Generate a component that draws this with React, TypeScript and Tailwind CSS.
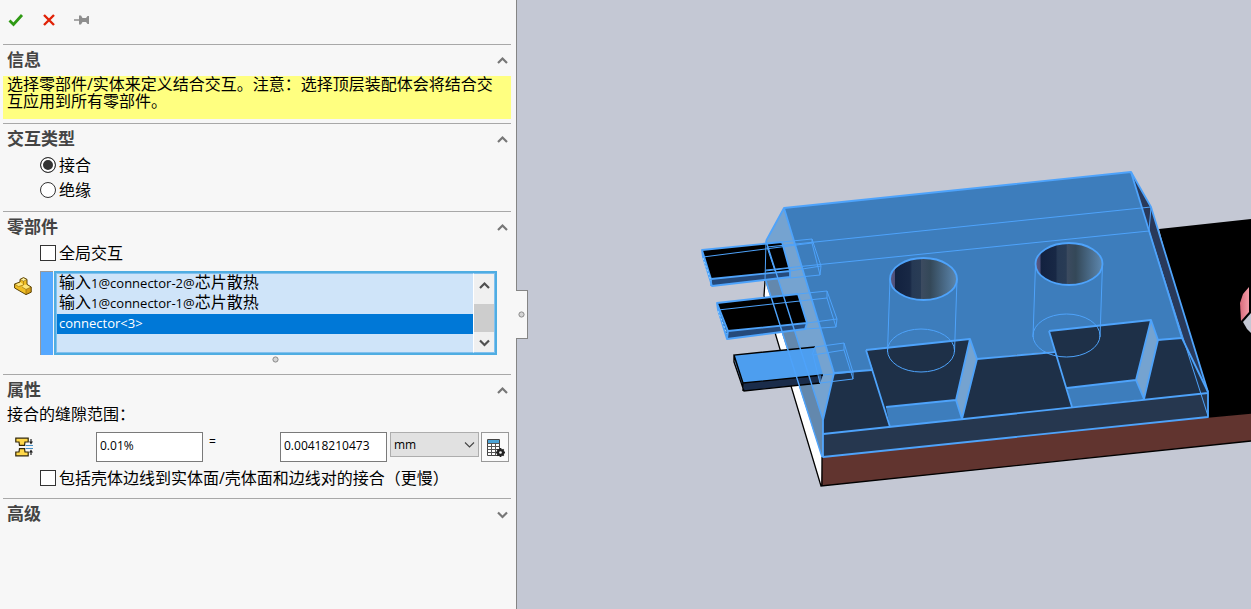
import { useState } from "react";
import type { ReactNode } from "react";

const components = [
  "输入1@connector-2@芯片散热",
  "输入1@connector-1@芯片散热",
  "connector<3>",
];

function Chevron({ up = false, color = "#777", size = 11, stroke = 2.2 }) {
  return (
    <svg width={size} height={size} viewBox="0 0 11 11" fill="none" aria-hidden="true">
      <path d={up ? "M1 8L5.5 3.5L10 8" : "M1 3.5L5.5 8L10 3.5"} stroke={color} strokeWidth={stroke} />
    </svg>
  );
}

function Grip() {
  return (
    <svg width="7" height="7" viewBox="0 0 7 7" aria-hidden="true">
      <circle cx="3.5" cy="3.5" r="2.6" fill="#d4d4d4" stroke="#8a8a8a" />
    </svg>
  );
}

type SectionProps = { title: string; open?: boolean; className?: string; children?: ReactNode };

function Section({ title, open = true, className = "", children }: SectionProps) {
  return (
    <section className={`border-t border-[#a8a8a8] ${className}`}>
      <h2>
        <button
          type="button"
          aria-expanded={open}
          className="flex h-[30px] w-full items-center justify-between pr-[3px] pl-1 text-[17px] leading-5 font-bold text-[#444]"
        >
          {title}
          <Chevron up={open} />
        </button>
      </h2>
      {children}
    </section>
  );
}

type RadioProps = { label: string; value: string; checked: boolean; onChange: (v: string) => void };

function Radio({ label, value, checked, onChange }: RadioProps) {
  return (
    <label className="flex h-[21px] items-center gap-[3px] pl-[37px]">
      <input
        type="radio"
        name="interaction"
        checked={checked}
        onChange={() => onChange(value)}
        className="size-4 appearance-none rounded-full border border-[#333] bg-white checked:bg-[#333] checked:shadow-[inset_0_0_0_2px_white]"
      />
      {label}
    </label>
  );
}

function Checkbox({ label }: { label: string }) {
  return (
    <label className="flex h-[21px] items-center gap-[3px] pl-[37px]">
      <input type="checkbox" className="size-4 shrink-0 appearance-none border border-[#333] bg-white checked:bg-[#333]" />
      {label}
    </label>
  );
}

function Toolbar() {
  return (
    <div className="flex h-11 items-center gap-[18px] pb-1 pl-[5px]">
      <button type="button" aria-label="确定">
        <svg width="16" height="14" viewBox="0 0 16 14" fill="none">
          <path d="M1.5 7.5L5.5 11.5L14 2" stroke="#2f9a14" strokeWidth="2.8" />
        </svg>
      </button>
      <button type="button" aria-label="取消">
        <svg width="14" height="14" viewBox="0 0 14 14" fill="none">
          <path d="M2 2L12 12M12 2L2 12" stroke="#e02207" strokeWidth="2.4" />
        </svg>
      </button>
      <button type="button" aria-label="保持可见">
        <svg width="16" height="12" viewBox="0 0 16 12" fill="#8e8e8e">
          <path d="M0 5.2H5V1.5H7L8.5 4H12L13.5 2H15V10H13.5L12 8H8.5L7 10.5H5V6.8H0Z" />
        </svg>
      </button>
    </div>
  );
}

function PartIcon() {
  return (
    <svg width="18" height="18" viewBox="0 0 18 18" strokeLinejoin="round" aria-hidden="true">
      <path d="M0.6 7L6 5V2.4L9.5 0.6L13 2.4V7.4L17.2 10V15.2L12 17.6L0.6 11Z" fill="#efbd24" />
      <path d="M6 2.4L9.5 0.6L13 2.4L9.5 4.2Z" fill="#fff0a0" />
      <path d="M0.6 7L6 5L9.5 7.4L4.5 9.6Z" fill="#ffe676" />
      <path d="M9.5 8L13 7.4L17.2 10L12 12.4L8 10Z" fill="#ffe676" />
      <path d="M12 12.4L17.2 10V15.2L12 17.6Z" fill="#d79f17" />
      <path d="M6 2.4L9.5 4.2L13 2.4M9.5 4.2V8L4.5 9.6L0.6 7M8 10L12 12.4L17.2 10M12 12.4V17.6" fill="none" stroke="#8a660e" strokeWidth="0.6" />
      <path d="M0.6 7L6 5V2.4L9.5 0.6L13 2.4V7.4L17.2 10V15.2L12 17.6L0.6 11Z" fill="none" stroke="#5b4308" />
    </svg>
  );
}

function GapIcon() {
  return (
    <svg width="19" height="20" viewBox="0 0 19 20" aria-hidden="true">
      <path d="M0.8 1.2H13.2V5H10L9.5 8.4H4.5L4 5H0.8Z" fill="#ffd84a" stroke="#33280a" strokeWidth="1.2" />
      <path d="M0.8 18.8H13.2V15H10L9.5 11.6H4.5L4 15H0.8Z" fill="#ffd84a" stroke="#33280a" strokeWidth="1.2" />
      <path d="M10.5 8.5H18M10.5 11.5H18" stroke="#4791c8" />
      <path d="M16 2V6M16 18V14" stroke="#222" strokeWidth="1.2" />
      <path d="M14 4.5H18L16 7.5ZM14 15.5H18L16 12.5Z" fill="#222" />
    </svg>
  );
}

function TableGearIcon() {
  return (
    <svg width="19" height="19" viewBox="0 0 19 19" aria-hidden="true">
      <path d="M1.5 1.5H13.5V17.5H1.5Z" fill="#fff" stroke="#444" />
      <path d="M2 2H13V5H2Z" fill="#4aa3d6" />
      <path d="M1.5 5.5H13.5M1.5 8.5H13.5M1.5 11.5H13.5M1.5 14.5H13.5M5.5 5.5V17.5M9.5 5.5V17.5" stroke="#555" />
      <circle cx="14.5" cy="14.5" r="3.6" fill="#222" />
      <path d="M14.5 10V19M10 14.5H19M11.3 11.3L17.7 17.7M17.7 11.3L11.3 17.7" stroke="#222" strokeWidth="1.8" />
      <circle cx="14.5" cy="14.5" r="1.3" fill="#f7f7f7" />
    </svg>
  );
}

function SelectionList() {
  const [selected, setSelected] = useState(2);

  return (
    <div className="mt-2 flex pr-[14px] pl-[11px]">
      <div className="w-[26px] pt-[6px]">
        <PartIcon />
      </div>
      <div className="mr-px w-[13px] border-t border-l border-[#999] bg-[#55a8ff]" />
      <div className="flex h-[84px] min-w-0 flex-1 border-2 border-[#4fade2] bg-[#cfe4f9]">
        <ul role="listbox" aria-label="零部件" className="min-w-0 flex-1 border border-r-0 border-[#82c0ee]">
          {components.map((name, idx) => (
            <li
              key={name}
              role="option"
              aria-selected={idx === selected}
              onClick={() => setSelected(idx)}
              className={`h-5 pl-[2px] leading-4 whitespace-nowrap ${
                idx === selected ? "bg-[#0078d7] text-white" : "text-black"
              }`}
            >
              {name.split(/([\x20-\x7e]+)/).map((part, i) => (
                <span key={i} className={i % 2 ? "text-[13px]" : "text-[16px]"}>
                  {part}
                </span>
              ))}
            </li>
          ))}
        </ul>
        <div className="flex w-[22px] flex-col items-center border border-l-white border-[#82c0ee] bg-[#f0f0f0]">
          <button type="button" aria-label="向上滚动" className="flex h-[30px] items-center pb-2">
            <Chevron up color="#505050" />
          </button>
          <div className="h-7 w-full bg-[#cdcdcd]" />
          <button type="button" aria-label="向下滚动" className="flex flex-1 items-center">
            <Chevron color="#505050" />
          </button>
        </div>
      </div>
    </div>
  );
}

function PropertyPanel() {
  const [interaction, setInteraction] = useState("bonded");

  return (
    <aside className="relative z-10 w-[517px] shrink-0 border-r border-[#858585] bg-[#f7f7f7] pr-[5px] pl-[3px]">
      <Toolbar />
      <Section title="信息" className="pb-1">
        <p className="mt-px h-[43px] bg-[#ffff80] pr-4 pl-1 leading-[17px]">
          选择零部件/实体来定义结合交互。注意：选择顶层装配体会将结合交互应用到所有零部件。
        </p>
      </Section>
      <Section title="交互类型" className="pb-[11px]">
        <div className="flex flex-col gap-1">
          <Radio label="接合" value="bonded" checked={interaction === "bonded"} onChange={setInteraction} />
          <Radio label="绝缘" value="insulated" checked={interaction === "insulated"} onChange={setInteraction} />
        </div>
      </Section>
      <Section title="零部件" className="pb-[10px]">
        <Checkbox label="全局交互" />
        <SelectionList />
        <div className="flex h-[9px] items-center justify-center pl-9">
          <Grip />
        </div>
      </Section>
      <Section title="属性" className="pb-[10px]">
        <p className="h-[21px] pl-1 leading-[18px]">接合的缝隙范围：</p>
        <div className="mt-[6px] flex h-[30px] items-start pr-[2px] pl-3 text-[12px]">
          <div className="w-[81px] pt-[5px]">
            <GapIcon />
          </div>
          <input
            aria-label="缝隙百分比"
            defaultValue="0.01%"
            className="h-full w-[107px] border border-[#7a7a7a] bg-white px-[3px] pb-1"
          />
          <span className="flex-1 pl-[6px] leading-5">=</span>
          <input
            aria-label="缝隙值"
            defaultValue="0.00418210473"
            className="mr-[3px] h-full w-[107px] border border-[#7a7a7a] bg-white px-[3px] pb-1"
          />
          <div className="relative mr-[2px] w-[89px]">
            <select
              aria-label="单位"
              className="h-[25px] w-full appearance-none border border-[#adadad] bg-[#e1e1e1] pl-[3px] text-[12px]"
            >
              <option>mm</option>
            </select>
            <span className="pointer-events-none absolute top-[7px] right-1">
              <Chevron color="#444" stroke={1.1} />
            </span>
          </div>
          <button
            type="button"
            aria-label="公式表"
            className="flex h-full w-7 items-center justify-center border border-[#999] bg-[#fafafa]"
          >
            <TableGearIcon />
          </button>
        </div>
        <div className="mt-[5px]">
          <Checkbox label="包括壳体边线到实体面/壳体面和边线对的接合（更慢）" />
        </div>
      </Section>
      <Section title="高级" open={false} />
      <button
        type="button"
        aria-label="折叠面板"
        className="absolute top-[290px] -right-3 flex h-[49px] w-3 items-center justify-center border border-l-0 border-[#858585] bg-[#f7f7f7] pr-px"
      >
        <Grip />
      </button>
    </aside>
  );
}

function Hole({ x, y }: { x: number; y: number }) {
  return (
    <g>
      <ellipse cx={x} cy={y} rx="33.5" ry="21" fill="url(#bore)" strokeWidth="1.8" />
      <g strokeWidth="1">
        <path d={`M${x - 33.5} ${y}L${x - 36} ${y + 73}M${x + 33.5} ${y}L${x + 31} ${y + 73}`} />
        <ellipse cx={x - 2.5} cy={y + 71.5} rx="33.5" ry="21.5" />
      </g>
    </g>
  );
}

function Model() {
  return (
    <svg
      viewBox="517 0 734 609"
      preserveAspectRatio="xMinYMin slice"
      className="h-full min-w-0 flex-1"
      fill="none"
      role="img"
      aria-label="装配体模型"
    >
      <defs>
        <linearGradient id="bore">
          <stop offset="0" stopColor="#5f5a85" />
          <stop offset="0.07" stopColor="#4d4f78" />
          <stop offset="0.08" stopColor="#12213f" />
          <stop offset="0.3" stopColor="#182845" />
          <stop offset="0.33" stopColor="#263954" />
          <stop offset="0.46" stopColor="#293c55" />
          <stop offset="0.47" stopColor="#3c4b60" />
          <stop offset="0.6" stopColor="#344858" />
          <stop offset="1" stopColor="#5d88b0" />
        </linearGradient>
        <linearGradient id="pink">
          <stop offset="0" stopColor="#d96c7c" />
          <stop offset="1" stopColor="#f49ca8" />
        </linearGradient>
      </defs>

      {/* board */}
      <path d="M1159 229L1251 219V413L1208 417Z" fill="#000" />
      <path d="M1249 287L1243 294L1240 303L1241 321L1249 312Z" fill="url(#pink)" />
      <path d="M1251 313L1243 322L1247 329L1251 333Z" fill="#c4c8d4" />
      <path d="M822 457L1208 417L1251 413V441L821 486Z" fill="#61342f" />
      <path d="M765 281L764 296L821 486L822 457Z" fill="#fff" />
      <path d="M765 281L764 296L821 486L1251 441M822 457V486M1208 417L1251 413" stroke="#000" strokeWidth="1.3" />

      {/* housing faces */}
      <path d="M784 208L1131 172L1182 338L834 373Z" fill="#3d7dbc" />
      <path d="M784 208L766 241L765 247L823 420L834 373Z" fill="#75a3d0" />
      <path d="M766 241L765 281L822 457L823 420Z" fill="#6388ad" />
      <path d="M1131 172L1151 207L1208 392L1182 338Z" fill="#29395a" />
      <path d="M834 373L1182 338L1208 393L823 434V420Z" fill="#1e3048" />
      <path d="M823 434L1208 393V417L823 457Z" fill="#26374f" />

      {/* connector pins */}
      <path d="M702 250L782 242L790 271L711 279Z" fill="#000" />
      <path d="M711 279L790 271V277L712 286Z" fill="#254a7b" />
      <path d="M702 250L711 279L712 286L703 257Z" fill="#387bc0" />
      <path d="M717 303L798 294L807 323L728 331Z" fill="#000" />
      <path d="M728 331L807 323L805 329L727 339Z" fill="#254a7b" />
      <path d="M717 303L728 331L727 339L718 309Z" fill="#387bc0" />
      <path d="M734 355L815 347L823 375L743 383Z" fill="#4d9eef" />
      <path d="M743 383L823 375L820 383L744 391Z" fill="#1a2c4a" />
      <path d="M734 355L743 383L744 391L735 362Z" fill="#2d609a" />
      <path d="M815 347L734 355L743 383L823 375M734 355V362L744 391L820 383M743 383V391" stroke="#000" strokeWidth="1.4" />

      {/* pockets */}
      <path d="M866 350L970 339L956 400L886 407Z" fill="#1e3048" />
      <path d="M970 339L977 359L962 419L956 400Z" fill="#75a3d0" />
      <path d="M886 407L956 400L962 419L890 427Z" fill="#3d7dbc" />
      <path d="M1049 331L1151 320L1136 380L1067 388Z" fill="#1e3048" />
      <path d="M1151 320L1158 340L1144 399L1136 380Z" fill="#75a3d0" />
      <path d="M1067 388L1136 380L1144 399L1072 407Z" fill="#3d7dbc" />

      {/* highlighted edges */}
      <g stroke="#4ea3fb" strokeLinejoin="round">
        <g strokeWidth="1.8">
          <path d="M766 241L784 208L1131 172L1151 207L1208 392V417L823 457V420L834 373L784 208" />
          <path d="M1131 172L1182 338L1208 392M823 434L1208 393" />
          <path d="M834 373L872 370M977 359L1055 352M1157 340L1182 338" />
          <path d="M866 350L970 339L977 359L962 419L956 400L886 407M866 350L890 427M970 339L956 400" />
          <path d="M1049 331L1151 320L1158 340L1144 399L1136 380L1067 388M1049 331L1072 407M1151 320L1136 380" />
          <path d="M766 281L822 457M766 241L823 420" strokeWidth="1.4" />
          <path d="M782 242L702 250L703 257L712 286L790 277V271L782 242M702 250L711 279L790 271M711 279V286" />
          <path d="M798 294L717 303L718 310L727 339L805 329L807 323L798 294M717 303L728 331L807 323M728 331L727 339" />
        </g>
        <g strokeWidth="1">
          <path d="M766 241L765 281M767 247L1151 207M766 270L1149 231L1151 207M1149 231L1208 416" />
          <path d="M703 257L812 243M782 242L812 239L821 266L790 271M812 239V243L820 275L790 278M821 266L820 275M765 271L790 268" />
          <path d="M718 310L827 298M798 294L827 291L837 319L807 323M827 291V298L836 327L805 329M837 319L836 327M767 247L775 271" />
          <path d="M813 355L844 350M815 347L844 343L853 372L823 375M844 343V350L853 379L820 383M853 372V379M813 355L820 383V375M815 347L812 355" />
        </g>
        <path d="M703 258L711 281M718 311L727 334" stroke="#9fd8ff" strokeWidth="1" strokeDasharray="2 2" />
        <Hole x={923.5} y={279} />
        <Hole x={1069} y={264} />
      </g>
    </svg>
  );
}

function App() {
  return (
    <main className="flex h-screen overflow-hidden bg-[#c4c8d4] font-['Open_Sans','Noto_Sans_CJK_SC',sans-serif] text-[16px] text-black">
      <PropertyPanel />
      <Model />
    </main>
  );
}

export default App;
